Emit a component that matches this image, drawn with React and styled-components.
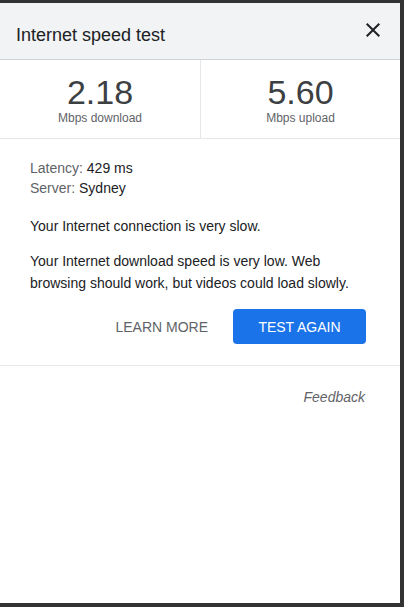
import React from "react";
import styled, { createGlobalStyle } from "styled-components";

const Global = createGlobalStyle`
  html, body { margin: 0; padding: 0; background: #333333; }
  body { padding-top: 3px; font-family: "Liberation Sans", Arial, sans-serif; }
  * { box-sizing: border-box; }
`;

const Panel = styled.div`
  width: 400px;
  height: 600px;
  background: #ffffff;
  display: flex;
  flex-direction: column;
`;

const Header = styled.div`
  height: 57px;
  background: #f1f3f4;
  border-bottom: 1px solid #cfd1d3;
  display: flex;
  justify-content: space-between;
  align-items: flex-start;
  padding: 0 15px 0 16px;
`;

const Title = styled.h1`
  margin: 20px 0 0;
  font-size: 18px;
  line-height: 24px;
  font-weight: 400;
  color: #202124;
`;

const CloseButton = styled.button`
  margin-top: 15px;
  width: 24px;
  height: 24px;
  padding: 0;
  border: 0;
  background: none;
  color: #202124;
  display: flex;
`;

const Stats = styled.div`
  display: grid;
  grid-template-columns: 1fr 1fr;
  border-bottom: 1px solid #e6e7e8;
`;

const Stat = styled.div`
  display: flex;
  flex-direction: column;
  align-items: center;
  padding: 13px 0 13px;
  border-left: ${(p) => (p.$divided ? "1px solid #e6e7e8" : "0")};
`;

const Value = styled.div`
  font-size: 34px;
  line-height: 38px;
  color: #3c4043;
`;

const Unit = styled.div`
  font-size: 12px;
  line-height: 14px;
  color: #5f6368;
`;

const Body = styled.div`
  padding: 19px 34px 21px 30px;
  border-bottom: 1px solid #e8e8e8;
  font-size: 14px;
  color: #202124;
`;

const InfoLine = styled.div`
  line-height: 20px;
`;

const InfoLabel = styled.span`
  color: #5f6368;
`;

const Paragraph = styled.p`
  margin: ${(p) => p.$mt}px 0 0;
  line-height: 22px;
`;

const Actions = styled.div`
  margin-top: 15px;
  display: flex;
  justify-content: flex-end;
  gap: 9px;
`;

const TextButton = styled.button`
  height: 35px;
  padding: 0 16px;
  border: 0;
  background: none;
  font-family: inherit;
  font-size: 14px;
  color: #5f6368;
  text-transform: uppercase;
`;

const PrimaryButton = styled.button`
  height: 35px;
  width: 133px;
  padding: 0;
  border: 0;
  border-radius: 4px;
  background: #1a73e8;
  font-family: inherit;
  font-size: 14px;
  color: #ffffff;
  text-transform: uppercase;
`;

const Footer = styled.div`
  display: flex;
  justify-content: flex-end;
  padding: 21px 35px 0 30px;
`;

const FeedbackLink = styled.a`
  font-size: 14px;
  line-height: 20px;
  font-style: italic;
  color: #5f6368;
`;

export default function App() {
  return (
    <>
      <Global />
      <Panel>
        <Header>
          <Title>Internet speed test</Title>
          <CloseButton aria-label="Close">
            <svg width="24" height="24" viewBox="0 0 24 24" fill="currentColor">
              <path d="M19 6.41L17.59 5 12 10.59 6.41 5 5 6.41 10.59 12 5 17.59 6.41 19 12 13.41 17.59 19 19 17.59 13.41 12z" />
            </svg>
          </CloseButton>
        </Header>
        <Stats>
          <Stat>
            <Value>2.18</Value>
            <Unit>Mbps download</Unit>
          </Stat>
          <Stat $divided>
            <Value>5.60</Value>
            <Unit>Mbps upload</Unit>
          </Stat>
        </Stats>
        <Body>
          <InfoLine>
            <InfoLabel>Latency:</InfoLabel> 429 ms
          </InfoLine>
          <InfoLine>
            <InfoLabel>Server:</InfoLabel> Sydney
          </InfoLine>
          <Paragraph $mt={17}>Your Internet connection is very slow.</Paragraph>
          <Paragraph $mt={13}>
            Your Internet download speed is very low. Web browsing should work, but videos could load slowly.
          </Paragraph>
          <Actions>
            <TextButton>Learn more</TextButton>
            <PrimaryButton>Test again</PrimaryButton>
          </Actions>
        </Body>
        <Footer>
          <FeedbackLink>Feedback</FeedbackLink>
        </Footer>
      </Panel>
    </>
  );
}
